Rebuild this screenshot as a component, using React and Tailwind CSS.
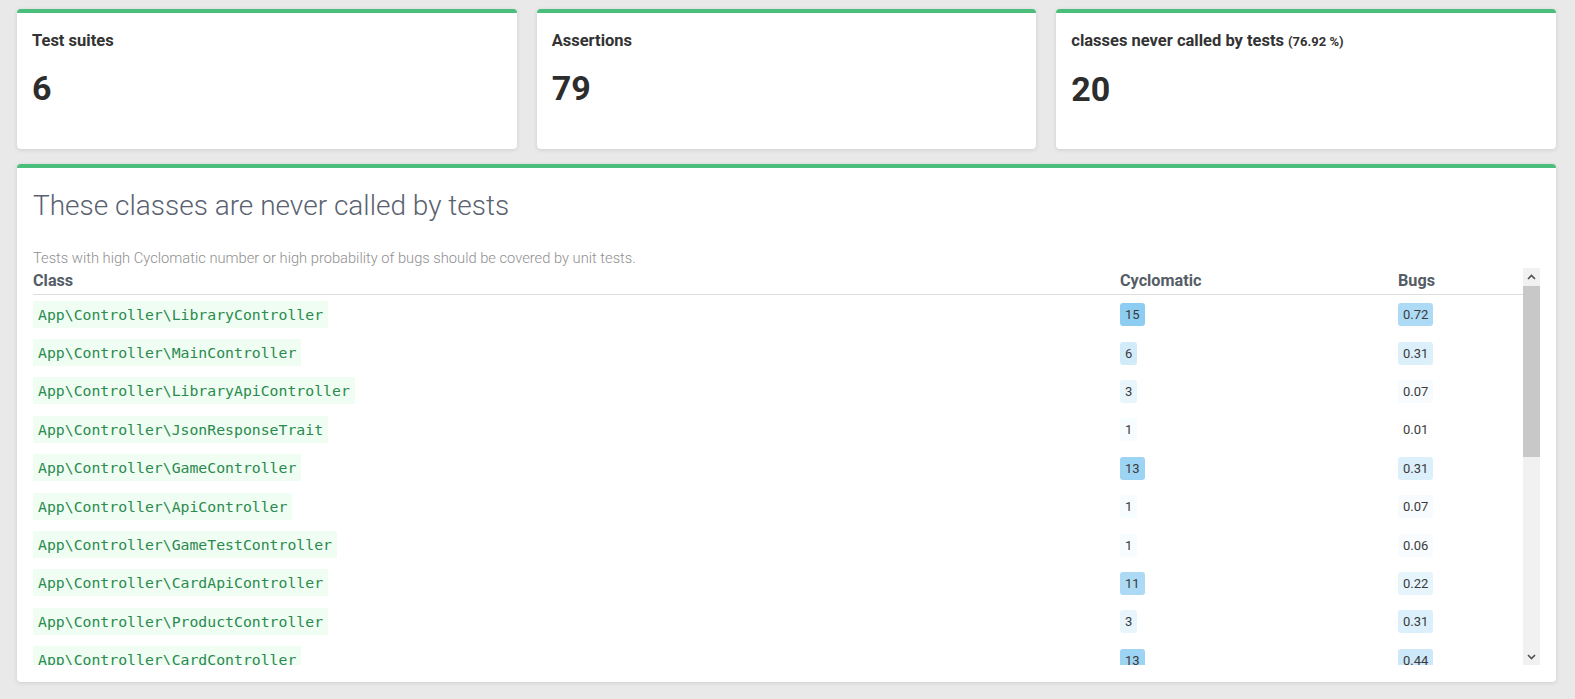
import React from 'react'

const stats = [
  { title: 'Test suites', value: '6' },
  { title: 'Assertions', value: '79' },
  { title: 'classes never called by tests', note: '(76.92 %)', value: '20' },
]

const classes = [
  { name: 'App\\Controller\\LibraryController', ccn: 15, bugs: 0.72 },
  { name: 'App\\Controller\\MainController', ccn: 6, bugs: 0.31 },
  { name: 'App\\Controller\\LibraryApiController', ccn: 3, bugs: 0.07 },
  { name: 'App\\Controller\\JsonResponseTrait', ccn: 1, bugs: 0.01 },
  { name: 'App\\Controller\\GameController', ccn: 13, bugs: 0.31 },
  { name: 'App\\Controller\\ApiController', ccn: 1, bugs: 0.07 },
  { name: 'App\\Controller\\GameTestController', ccn: 1, bugs: 0.06 },
  { name: 'App\\Controller\\CardApiController', ccn: 11, bugs: 0.22 },
  { name: 'App\\Controller\\ProductController', ccn: 3, bugs: 0.31 },
  { name: 'App\\Controller\\CardController', ccn: 13, bugs: 0.44 },
  { name: 'App\\Controller\\DiceGameController', ccn: 9, bugs: 0.38 },
  { name: 'App\\Controller\\ProjectController', ccn: 4, bugs: 0.12 },
  { name: 'App\\Entity\\Book', ccn: 1, bugs: 0.03 },
  { name: 'App\\Entity\\Product', ccn: 1, bugs: 0.02 },
  { name: 'App\\Repository\\BookRepository', ccn: 1, bugs: 0.01 },
  { name: 'App\\Repository\\ProductRepository', ccn: 1, bugs: 0.01 },
  { name: 'App\\Kernel', ccn: 1, bugs: 0 },
  { name: 'App\\Dice\\Dice', ccn: 2, bugs: 0.02 },
  { name: 'App\\Dice\\DiceHand', ccn: 3, bugs: 0.05 },
  { name: 'App\\Dice\\DiceGraphic', ccn: 1, bugs: 0.01 },
]

const shade = (a) => ({ backgroundColor: `rgba(142, 205, 242, ${a})` })

const StatCard = ({ title, note, value }) => (
  <div className="h-[140px] rounded-[4px] border-t-4 border-[#4abf7c] bg-white px-[15px] pt-[18px] shadow-[0_1px_4px_rgba(0,0,0,0.12)]">
    <h3 className="text-[16.5px] font-bold leading-[20px] text-[#333]">
      {title}
      {note && <span className="ml-[4px] text-[13px]">{note}</span>}
    </h3>
    <div className="mt-[17px] text-[34px] font-bold leading-[40px] text-[#2d2d2d]">{value}</div>
  </div>
)

const Chevron = ({ down }) => (
  <svg width="9" height="6" viewBox="0 0 9 6" className={down ? 'rotate-180' : ''}>
    <path d="M1 5 L4.5 1.5 L8 5" fill="none" stroke="#505050" strokeWidth="1.6" />
  </svg>
)

// drawn scrollbar, the screenshot browser hides native ones
const Scrollbar = () => (
  <div className="flex w-[17px] shrink-0 flex-col bg-[#f1f1f1]">
    <div className="flex h-[17px] items-center justify-center"><Chevron /></div>
    <div className="flex-1 pt-[1px]">
      <div className="h-[171px] bg-[#c8c8c8]" />
    </div>
    <div className="flex h-[17px] items-center justify-center"><Chevron down /></div>
  </div>
)

const App = () => {
  return (
    <div className="min-h-screen bg-[#e9e9e9] pb-[8px] pl-[17px] pr-[19px] pt-[9px] font-['Roboto',sans-serif]">
      <div className="grid grid-cols-3 gap-[20px]">
        {stats.map(s => <StatCard key={s.title} {...s} />)}
      </div>

      <div className="mt-[15px] h-[518px] overflow-hidden rounded-[4px] border-t-4 border-[#4abf7c] bg-white px-[16px] pt-[20px] shadow-[0_1px_4px_rgba(0,0,0,0.12)]">
        <h2 className="text-[28px] font-light leading-[36px] text-[#5a6270]">These classes are never called by tests</h2>
        <p className="mt-[24px] text-[14.7px] font-light leading-[20px] text-[#8f8f8f]">
          Tests with high Cyclomatic number or high probability of bugs should be covered by unit tests.
        </p>

        <div className="flex h-[397px]">
          <div className="flex-1 overflow-hidden">
            <div className="grid h-[27px] grid-cols-[1087px_278px_1fr] items-center border-b border-[#dedede] text-[16.2px] font-bold text-[#555d66]">
              <div>Class</div>
              <div>Cyclomatic</div>
              <div>Bugs</div>
            </div>
            {classes.map(c => (
              <div key={c.name} className="grid h-[38.4px] grid-cols-[1087px_278px_1fr] items-center">
                <div>
                  <span className="inline-block h-[27px] bg-[#effdf3] px-[5px] font-['DejaVu_Sans_Mono',monospace] text-[14.8px] leading-[27px] text-[#2b8a4e]">
                    {c.name}
                  </span>
                </div>
                <div>
                  <span className="inline-block h-[23px] rounded-[3px] px-[5px] text-[13px] leading-[23px] text-[#3a3a3a]" style={shade(c.ccn / 15)}>
                    {c.ccn}
                  </span>
                </div>
                <div>
                  <span className="inline-block h-[23px] rounded-[3px] px-[5px] text-[13px] leading-[23px] text-[#3a3a3a]" style={shade(c.bugs)}>
                    {c.bugs.toFixed(2)}
                  </span>
                </div>
              </div>
            ))}
          </div>
          <Scrollbar />
        </div>
      </div>
    </div>
  )
}

export default App
